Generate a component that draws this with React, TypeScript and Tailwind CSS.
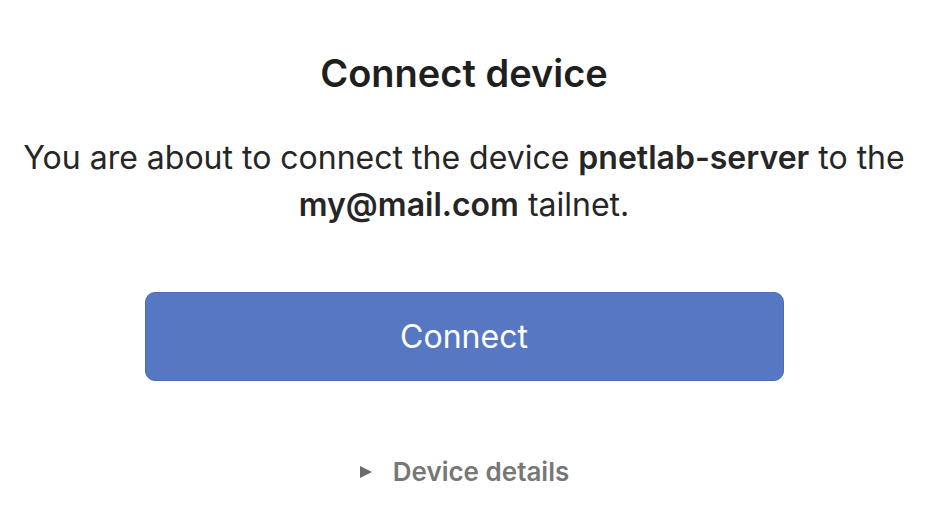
export default function App() {
  return (
    <div className="min-h-[530px] bg-white font-['Inter',sans-serif] text-[#1f1f1f]">
      <div className="mx-auto flex w-[900px] flex-col items-center pt-[50px] text-center">
        <h1 className="text-[38px] font-semibold leading-[46px]">Connect device</h1>
        <p className="mt-[38px] text-[32px] leading-[47px] text-[#262626]">
          You are about to connect the device <span className="font-semibold">pnetlab-server</span> to the{" "}
          <span className="font-semibold">my@mail.com</span> tailnet.
        </p>
        <button className="mt-[64px] h-[89px] w-[639px] rounded-[10px] border border-[#4a6cbd] bg-[#5678c3] text-[32px] text-white">
          Connect
        </button>
        <div className="mt-[71px] flex items-center gap-[20px] text-[26px] font-semibold text-[#777777]">
          <svg width="14" height="14" viewBox="0 0 14 14" className="fill-[#6b6b6b]">
            <path d="M1 1 L13 7 L1 13 Z" />
          </svg>
          <span>Device details</span>
        </div>
      </div>
    </div>
  );
}
